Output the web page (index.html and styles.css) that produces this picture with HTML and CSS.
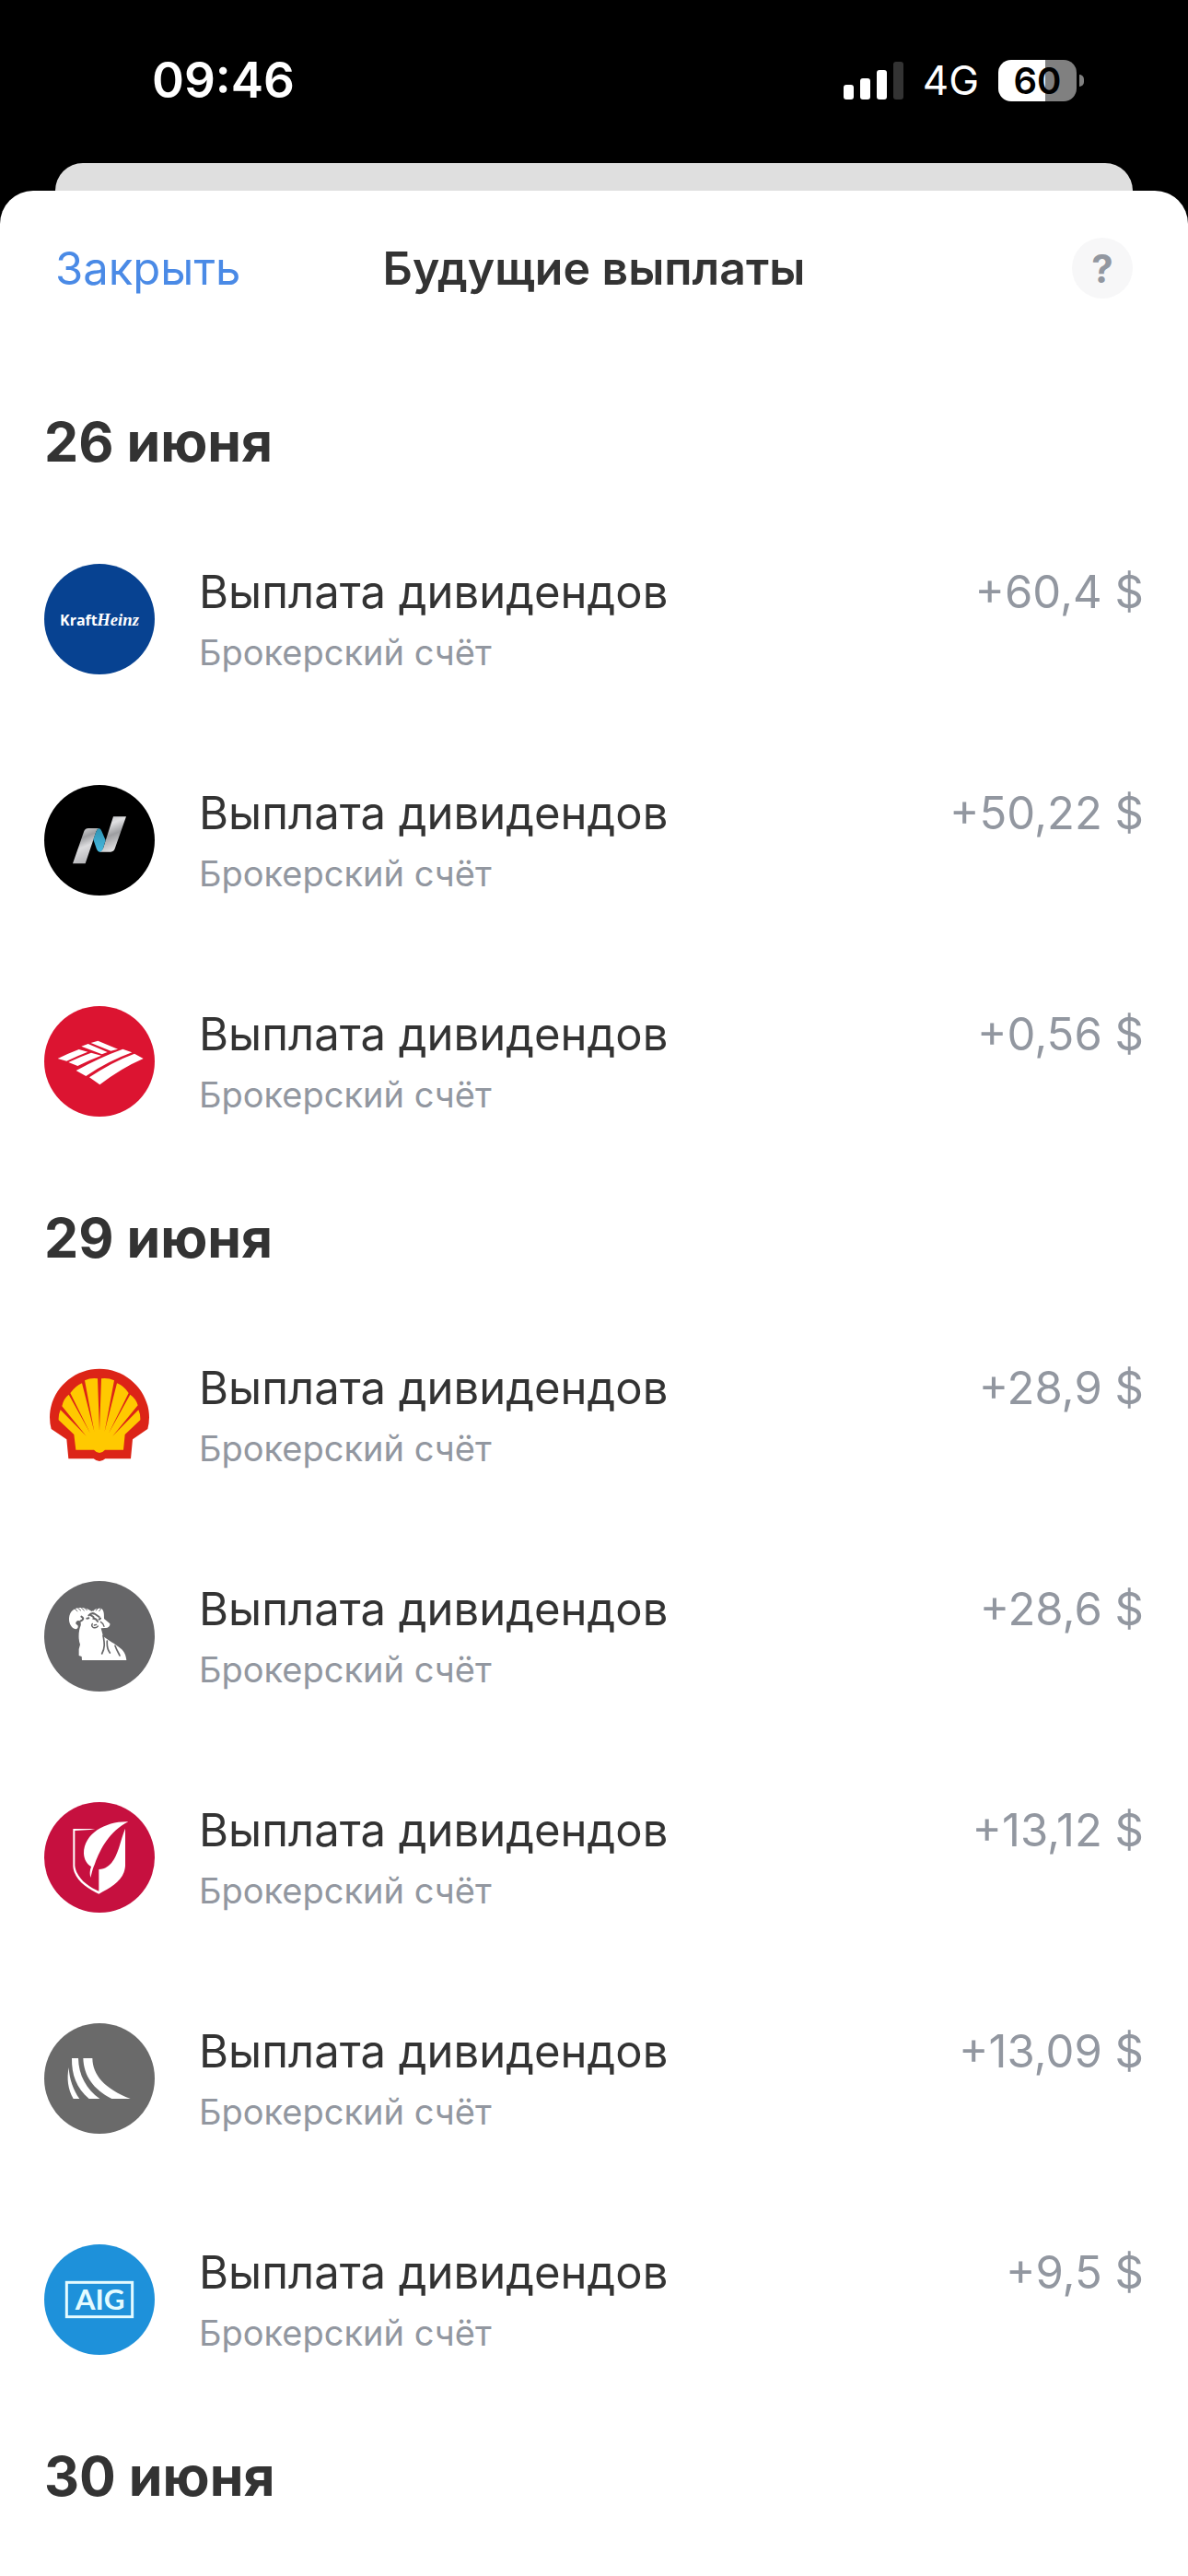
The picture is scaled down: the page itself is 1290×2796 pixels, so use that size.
FILE: index.html
```html
<!DOCTYPE html>
<html lang="ru">
<head>
    <meta charset="UTF-8">
    <meta name="viewport" content="width=device-width, initial-scale=1.0">
    <title>Будущие выплаты</title>
    <link rel="stylesheet" href="styles.css">
</head>
<body>
    <div class="status-bar">
        <span class="time">09:46</span>
        <div class="status-icons">
            <svg class="signal" viewBox="0 0 65 41" aria-hidden="true">
                <rect x="0" y="25" width="11" height="16" rx="3"/>
                <rect x="18" y="18" width="11" height="23" rx="3"/>
                <rect x="36" y="9" width="11" height="32" rx="3"/>
                <rect class="signal-off" x="54" y="0" width="11" height="41" rx="3"/>
            </svg>
            <span class="network">4G</span>
            <div class="battery">
                <span class="battery-level">60</span>
                <span class="battery-tip"></span>
            </div>
        </div>
    </div>

    <div class="back-sheet"></div>

    <main class="sheet">
        <header class="sheet-header">
            <button class="close-btn" type="button">Закрыть</button>
            <h1>Будущие выплаты</h1>
            <button class="help-btn" type="button" aria-label="Справка">?</button>
        </header>

        <section>
            <h2>26 июня</h2>
            <ul class="payments">
                <li class="payment">
                    <svg class="logo" viewBox="24 36 360 360" aria-hidden="true">
                        <circle cx="204" cy="216" r="180" fill="#074291"/>
                        <text class="logo-kraft" x="75" y="236">Kraft</text>
                        <text class="logo-heinz" x="196" y="236">Heinz</text>
                    </svg>
                    <div class="payment-info">
                        <span class="payment-title">Выплата дивидендов</span>
                        <span class="payment-account">Брокерский счёт</span>
                    </div>
                    <span class="amount">+60,4 $</span>
                </li>
                <li class="payment">
                    <svg class="logo" viewBox="24 36 360 360" aria-hidden="true">
                        <defs>
                            <linearGradient id="steelLeft" x1="0" y1="0" x2="0.3" y2="1">
                                <stop offset="0" stop-color="#e6e6e8"/>
                                <stop offset="0.35" stop-color="#9d9ea1"/>
                                <stop offset="0.6" stop-color="#dcdcde"/>
                                <stop offset="1" stop-color="#b8b8bb"/>
                            </linearGradient>
                            <linearGradient id="steelRight" x1="0" y1="0" x2="0.3" y2="1">
                                <stop offset="0" stop-color="#b9b9bc"/>
                                <stop offset="0.3" stop-color="#e0e0e2"/>
                                <stop offset="0.6" stop-color="#9d9ea1"/>
                                <stop offset="1" stop-color="#dededf"/>
                            </linearGradient>
                            <linearGradient id="blueFold" x1="0" y1="0" x2="0" y2="1">
                                <stop offset="0" stop-color="#2f93b3"/>
                                <stop offset="1" stop-color="#46b9de"/>
                            </linearGradient>
                        </defs>
                        <circle cx="204" cy="216" r="180" fill="#000"/>
                        <path d="M117 292 154 186Q158 177 168 177H203Q196 179 193 188L158 292Z" fill="url(#steelLeft)"/>
                        <path d="M291 139 254 244Q250 254 241 254H204Q212 251 216 242L249 139Z" fill="url(#steelRight)"/>
                        <path d="M203 177Q208 178 211 186L224 216 216 242Q212 253 204 254 198 252 195 245L184 214 193 188Q197 178 203 177Z" fill="url(#blueFold)"/>
                    </svg>
                    <div class="payment-info">
                        <span class="payment-title">Выплата дивидендов</span>
                        <span class="payment-account">Брокерский счёт</span>
                    </div>
                    <span class="amount">+50,22 $</span>
                </li>
                <li class="payment">
                    <svg class="logo" viewBox="24 36 360 360" aria-hidden="true">
                        <circle cx="204" cy="216" r="180" fill="#dc1431"/>
                        <g fill="#fff">
                            <path d="M68 207Q105 189 137 177L166 185Q132 198 97 215Z"/>
                            <path d="M103 219Q143 200 177 188L210 197Q170 212 133 231Z"/>
                            <path d="M145 167 167 159 230 186 212 193Z"/>
                            <path d="M176 156 199 149 264 176 241 182Z"/>
                            <path d="M128 246Q205 203 280 176L310 187Q232 215 160 264Z"/>
                            <path d="M171 268Q245 218 318 191L347 207Q275 238 205 292Z"/>
                        </g>
                    </svg>
                    <div class="payment-info">
                        <span class="payment-title">Выплата дивидендов</span>
                        <span class="payment-account">Брокерский счёт</span>
                    </div>
                    <span class="amount">+0,56 $</span>
                </li>
            </ul>
        </section>

        <section>
            <h2>29 июня</h2>
            <ul class="payments">
                <li class="payment">
                    <svg class="logo" viewBox="24 18 360 360" aria-hidden="true">
                        <path d="M204 47C295 47 366 122 366 205Q366 225 361 243L312 277 306 340H223Q214 348 204 348T185 340H103L97 277 47 243Q42 225 42 205C42 122 113 47 204 47Z" fill="#dc2417"/>
                        <path d="M77 181 161 266 82 169Q86 145 104 131L174 257 109 126Q126 103 147 94L187 251 156 85Q176 76 198 79L204 250 210 79Q232 76 252 85L221 251 261 94Q284 103 299 126L234 257 304 131Q324 145 329 166L247 266 331 181Q338 196 337 214L287 261 282 311H222Q213 321 204 321T186 311H127L121 261 71 214Q70 196 77 181Z" fill="#ffc900"/>
                    </svg>
                    <div class="payment-info">
                        <span class="payment-title">Выплата дивидендов</span>
                        <span class="payment-account">Брокерский счёт</span>
                    </div>
                    <span class="amount">+28,9 $</span>
                </li>
                <li class="payment">
                    <svg class="logo" viewBox="24 33 360 360" aria-hidden="true">
                        <circle cx="204" cy="213" r="180" fill="#666668"/>
                        <path d="M147 291 146 279 137 276V255L141 240C134 222 136 193 143 178 145 166 139 160 132 163 124 168 126 175 133 177 136 183 133 189 127 190 112 187 104 170 105 154 107 132 121 120 141 120 159 120 169 126 179 132 187 124 200 120 211 123 219 130 219 141 219 156L238 172C240 180 231 188 222 186L209 187 216 213C234 227 260 241 273 253 286 263 290 276 292 291Z" fill="#fff"/>
                        <g fill="none" stroke="#666668" stroke-linecap="round">
                            <path d="M124 124 132 131M134 121 143 129M145 120 154 129M156 121 163 128M188 123 184 130M199 121 193 129M210 122 203 131" stroke-width="3"/>
                            <path d="M169 145Q179 134 190 141L203 150M145 149Q155 155 148 160L142 164M163 155 169 154M203 158 207 155M176 145Q187 149 185 155 194 155 198 165" stroke-width="6"/>
                            <path d="M181 172Q176 178 183 184 193 188 199 180M187 177 194 175M208 166Q217 171 219 181" stroke-width="4"/>
                            <path d="M216 211C221 236 222 252 212 270M229 228C228 242 231 258 238 267M255 244C259 257 266 266 270 276" stroke-width="5"/>
                        </g>
                    </svg>
                    <div class="payment-info">
                        <span class="payment-title">Выплата дивидендов</span>
                        <span class="payment-account">Брокерский счёт</span>
                    </div>
                    <span class="amount">+28,6 $</span>
                </li>
                <li class="payment">
                    <svg class="logo" viewBox="24 33 360 360" aria-hidden="true">
                        <circle cx="204" cy="213" r="180" fill="#c6103f"/>
                        <path d="M118 120H190L174 123 124 126V240C129 281 168 309 202 323V252C244 251 259 207 269 177 275 156 281 136 288 119V241C285 288 242 310 202 332 166 315 121 287 118 242Z" fill="#fff"/>
                        <path d="M298 97C229 94 153 133 153 200 154 221 164 235 177 243 172 255 172 267 175 279 179 264 181 252 189 234 207 185 236 129 298 97Z" fill="#fff"/>
                    </svg>
                    <div class="payment-info">
                        <span class="payment-title">Выплата дивидендов</span>
                        <span class="payment-account">Брокерский счёт</span>
                    </div>
                    <span class="amount">+13,12 $</span>
                </li>
                <li class="payment">
                    <svg class="logo" viewBox="24 33 360 360" aria-hidden="true">
                        <circle cx="204" cy="213" r="180" fill="#6a6a6a"/>
                        <g fill="#fff">
                            <path d="M104 177C106 216 119 251 139 279H119C101 248 97 213 104 177Z"/>
                            <path d="M114 147H135C136 203 162 248 205 279H170C129 245 113 200 114 147Z"/>
                            <path d="M151 147H181C182 202 220 246 305 279H244C184 248 153 205 151 147Z"/>
                        </g>
                    </svg>
                    <div class="payment-info">
                        <span class="payment-title">Выплата дивидендов</span>
                        <span class="payment-account">Брокерский счёт</span>
                    </div>
                    <span class="amount">+13,09 $</span>
                </li>
                <li class="payment">
                    <svg class="logo" viewBox="24 33 360 360" aria-hidden="true">
                        <circle cx="204" cy="213" r="180" fill="#1e91da"/>
                        <rect x="97" y="157" width="214" height="112" fill="none" stroke="#e4fbff" stroke-width="9"/>
                        <text class="logo-aig" x="206" y="247">AIG</text>
                    </svg>
                    <div class="payment-info">
                        <span class="payment-title">Выплата дивидендов</span>
                        <span class="payment-account">Брокерский счёт</span>
                    </div>
                    <span class="amount">+9,5 $</span>
                </li>
            </ul>
        </section>

        <section>
            <h2>30 июня</h2>
        </section>
    </main>
</body>
</html>
```
FILE: styles.css
```css
* {
    box-sizing: border-box;
}
body {
    margin: 0;
    min-height: 100vh;
    display: flex;
    flex-direction: column;
    background: #000;
    color: #333;
    font-family: Inter, "Liberation Sans", sans-serif;
}
h1, h2, ul {
    margin: 0;
    padding: 0;
}
button {
    padding: 0;
    border: none;
    background: none;
    font-family: inherit;
    cursor: pointer;
}

/* status bar */
.status-bar {
    display: flex;
    align-items: center;
    justify-content: space-between;
    height: 177px;
    padding: 0 113px 3px 165px;
    color: #fff;
}
.time {
    font-size: 53px;
    font-weight: 600;
}
.status-icons {
    display: flex;
    align-items: center;
    gap: 21px;
}
.signal {
    width: 65px;
    height: 41px;
    fill: #fff;
}
.signal .signal-off {
    fill: #333;
}
.network {
    font-size: 44px;
    font-weight: 400;
}
.battery {
    position: relative;
    display: flex;
    align-items: center;
    justify-content: center;
    width: 93px;
    height: 45px;
    padding-right: 8px;
}
.battery-level {
    width: 85px;
    border-radius: 14px;
    background: linear-gradient(to right, #fff 60%, #808080 60%);
    color: #000;
    font-size: 40px;
    font-weight: 600;
    line-height: 45px;
    text-align: center;
}
.battery-tip {
    position: absolute;
    right: 0;
    top: 16px;
    width: 5px;
    height: 13px;
    border-radius: 0 5px 5px 0;
    background: #808080;
}

/* sheets */
.back-sheet {
    height: 30px;
    margin: 0 60px;
    border-radius: 30px 30px 0 0;
    background: #dfdfdf;
}
.sheet {
    flex: 1;
    border-radius: 36px 36px 0 0;
    background: #fff;
}
.sheet-header {
    display: grid;
    grid-template-columns: 1fr auto 1fr;
    align-items: center;
    height: 168px;
    margin-bottom: 33px;
    padding: 0 60px;
}
.close-btn {
    justify-self: start;
    color: #4a8ae6;
    font-size: 49px;
}
h1 {
    font-size: 50px;
    font-weight: 600;
}
.help-btn {
    justify-self: end;
    width: 66px;
    height: 66px;
    border-radius: 50%;
    background: #f7f7f8;
    color: #9297a0;
    font-size: 42px;
    font-weight: 700;
}

/* payments */
h2 {
    padding: 0 48px;
    font-size: 59px;
    font-weight: 700;
    line-height: 144px;
}
.payments {
    list-style: none;
}
.payment {
    display: flex;
    padding: 60px 48px;
}
.logo {
    flex: none;
    width: 120px;
    height: 120px;
    margin-right: 48px;
}
.payment-info {
    display: flex;
    flex: 1;
    flex-direction: column;
    gap: 10px;
}
.payment-title,
.amount {
    font-size: 49px;
    line-height: 62px;
}
.payment-account {
    font-size: 38px;
    line-height: 48px;
}
.payment-account,
.amount {
    color: #9297a0;
}

/* lettering inside logos */
.logo-kraft {
    fill: #fff;
    font: 700 48px "Open Sans", sans-serif;
}
.logo-heinz {
    fill: #fff;
    font: italic 700 56px "Liberation Serif", serif;
}
.logo-aig {
    fill: #e4fbff;
    font: 700 94px Lato, sans-serif;
    text-anchor: middle;
}
```
